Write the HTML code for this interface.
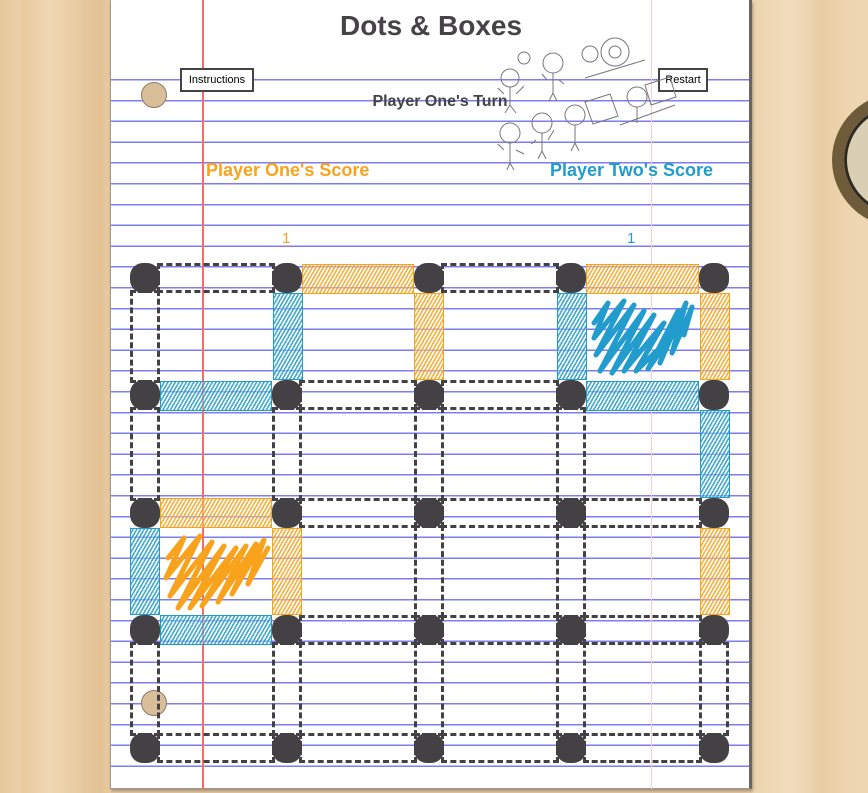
<!DOCTYPE html>
<html><head><meta charset="utf-8"><style>
*{margin:0;padding:0;box-sizing:border-box}
body{width:868px;height:793px;overflow:hidden;position:relative;font-family:"Liberation Sans",sans-serif;
background:linear-gradient(90deg,#e6c79c 0,#ecd0a8 20px,#e9c99e 22px,#f0d8b4 50px,#e8c99f 80px,#e2c193 100px,#e9cba1 110px);}
.wood2{position:absolute;left:752px;top:0;width:116px;height:793px;background:linear-gradient(90deg,#ecd4ae,#f0dcbc 40px,#e9cda4 70px,#eed6b2 100px);}
.lens{position:absolute;left:832px;top:92px;width:140px;height:136px;border-radius:50%;border:12px solid #6d5b3a;background:#d9cfb4;box-shadow:inset 0 0 0 3px #2e2a22}
.paper{position:absolute;left:110px;top:0;width:642px;height:789px;background:#fff;border-left:1px solid #999;border-right:3px solid #6a6560;border-bottom:1px solid #999;box-shadow:1px 2px 3px rgba(0,0,0,.3)}
.lines{position:absolute;left:111px;top:79px;width:638px;height:689px;background:repeating-linear-gradient(180deg,#7d7df3 0,#7d7df3 1.5px,transparent 1.5px,transparent 20.8px)}
.red{position:absolute;left:202px;top:0;width:1.5px;height:789px;background:#f56a6a}
.pink{position:absolute;left:651px;top:0;width:1px;height:789px;background:#f6d0d0}
.hole{position:absolute;width:26px;height:26px;border-radius:50%;background:#d9bf99;border:1.5px solid #8a7c6a}
.abs{position:absolute}
.title{left:110px;width:642px;top:10px;text-align:center;font-size:28px;font-weight:bold;color:#454345}
.btn{position:absolute;height:24px;border:2px solid #444;background:#fff;font-size:11px;line-height:20px;text-align:center;color:#000}
.d{position:absolute;width:30px;height:30px;border-radius:13px;background:#434143}
.s{position:absolute;border:3px dashed #434143}
.o{position:absolute;border:1px solid #f9a21c;background:repeating-linear-gradient(-60deg,rgba(249,162,28,.85) 0 1.6px,rgba(255,255,255,.4) 1.6px 3.2px)}
.b{position:absolute;border:1px solid #219ccc;background:repeating-linear-gradient(-60deg,rgba(33,156,204,.85) 0 1.6px,rgba(255,255,255,.4) 1.6px 3.2px)}
</style></head><body>
<div class="wood2"></div>
<div class="lens"></div>
<div class="paper"></div>
<div class="lines"></div>
<div class="red"></div>
<div class="pink"></div>
<div class="hole" style="left:141px;top:82px"></div>
<div class="hole" style="left:141px;top:690px"></div>
<div class="abs title">Dots &amp; Boxes</div>
<div class="btn" style="left:180px;top:68px;width:74px">Instructions</div>
<div class="btn" style="left:658px;top:68px;width:50px">Restart</div>
<div class="abs" style="left:300px;width:280px;top:93px;text-align:center;font-size:16px;font-weight:bold;color:#444">Player One's Turn</div>
<div class="abs" style="left:206px;top:160px;font-size:18px;font-weight:bold;color:#f9a21c">Player One's Score</div>
<div class="abs" style="left:550px;top:160px;font-size:18px;font-weight:bold;color:#219ccc">Player Two's Score</div>
<div class="abs" style="left:282px;top:230px;font-size:15px;color:#f9a21c">1</div>
<div class="abs" style="left:627px;top:230px;font-size:15px;color:#219ccc">1</div>
<svg class="abs" style="left:490px;top:30px" width="190" height="140" fill="none" stroke="#777" stroke-width="1">
<circle cx="20" cy="48" r="9"/><path d="M20 57v18M14 64l-6-6M26 64l8-8M20 75l-5 8M20 75l6 8"/><circle cx="34" cy="28" r="6"/>
<circle cx="63" cy="33" r="10"/><path d="M63 43v20M57 50l-5-6M69 50l5 4M63 63l-4 8M63 63l4 8"/>
<circle cx="100" cy="24" r="8"/><circle cx="125" cy="22" r="14"/><circle cx="125" cy="22" r="6"/><path d="M95 48l60-18"/>
<circle cx="20" cy="103" r="10"/><path d="M20 113v20M14 120l-6-6M26 120l8 4M20 133l-4 9M20 133l5 9"/>
<circle cx="52" cy="93" r="10"/><path d="M52 103v18M46 110l-5 4M58 110l6-10M52 121l-4 8M52 121l4 8"/>
<circle cx="85" cy="85" r="10"/><path d="M95 72l25-8 8 22-25 8zM85 95v18M85 113l-4 8M85 113l4 8"/>
<circle cx="147" cy="67" r="10"/><path d="M155 55l25-8 6 20-25 8zM147 77v16M130 95l55-20"/>
</svg>
<!-- dashed segments -->
<div class="s" style="left:157px;top:263px;width:118px;height:30px"></div>
<div class="s" style="left:441px;top:263px;width:118px;height:30px"></div>
<div class="s" style="left:299px;top:380px;width:118px;height:30px"></div>
<div class="s" style="left:441px;top:380px;width:118px;height:30px"></div>
<div class="s" style="left:299px;top:498px;width:118px;height:30px"></div>
<div class="s" style="left:441px;top:498px;width:118px;height:30px"></div>
<div class="s" style="left:583px;top:498px;width:119px;height:30px"></div>
<div class="s" style="left:299px;top:615px;width:118px;height:30px"></div>
<div class="s" style="left:441px;top:615px;width:118px;height:30px"></div>
<div class="s" style="left:583px;top:615px;width:119px;height:30px"></div>
<div class="s" style="left:157px;top:733px;width:118px;height:30px"></div>
<div class="s" style="left:299px;top:733px;width:118px;height:30px"></div>
<div class="s" style="left:441px;top:733px;width:118px;height:30px"></div>
<div class="s" style="left:583px;top:733px;width:119px;height:30px"></div>
<div class="s" style="left:130px;top:290px;width:30px;height:93px"></div>
<div class="s" style="left:130px;top:407px;width:30px;height:94px"></div>
<div class="s" style="left:272px;top:407px;width:30px;height:94px"></div>
<div class="s" style="left:414px;top:407px;width:30px;height:94px"></div>
<div class="s" style="left:556px;top:407px;width:30px;height:94px"></div>
<div class="s" style="left:414px;top:525px;width:30px;height:93px"></div>
<div class="s" style="left:556px;top:525px;width:30px;height:93px"></div>
<div class="s" style="left:130px;top:642px;width:30px;height:94px"></div>
<div class="s" style="left:272px;top:642px;width:30px;height:94px"></div>
<div class="s" style="left:414px;top:642px;width:30px;height:94px"></div>
<div class="s" style="left:556px;top:642px;width:30px;height:94px"></div>
<div class="s" style="left:699px;top:642px;width:30px;height:94px"></div>
<!-- filled -->
<div class="o" style="left:302px;top:264px;width:112px;height:30px"></div>
<div class="o" style="left:586px;top:264px;width:113px;height:30px"></div>
<div class="b" style="left:160px;top:381px;width:112px;height:30px"></div>
<div class="b" style="left:586px;top:381px;width:113px;height:30px"></div>
<div class="o" style="left:160px;top:498px;width:112px;height:30px"></div>
<div class="b" style="left:160px;top:615px;width:112px;height:30px"></div>
<div class="b" style="left:273px;top:293px;width:30px;height:87px"></div>
<div class="o" style="left:414px;top:293px;width:30px;height:87px"></div>
<div class="b" style="left:557px;top:293px;width:30px;height:87px"></div>
<div class="o" style="left:700px;top:293px;width:30px;height:87px"></div>
<div class="b" style="left:700px;top:410px;width:30px;height:88px"></div>
<div class="b" style="left:130px;top:528px;width:30px;height:87px"></div>
<div class="o" style="left:272px;top:528px;width:30px;height:87px"></div>
<div class="o" style="left:700px;top:528px;width:30px;height:87px"></div>
<svg class="abs" style="left:586px;top:293px" width="113" height="87" fill="none" stroke="#219ccc" stroke-width="5" stroke-linecap="round" stroke-linejoin="round">
<path d="M8 30L22 10 8 45 38 8 10 62 48 12 14 78 58 18 26 80 68 22 38 78 78 30 50 78 84 45 62 76 92 18 74 70 100 10 86 60 106 14 98 42"/></svg>
<svg class="abs" style="left:160px;top:528px" width="113" height="87" fill="none" stroke="#f9a21c" stroke-width="5" stroke-linecap="round" stroke-linejoin="round">
<path d="M8 30L24 10 6 50 40 8 10 68 52 14 18 80 64 18 30 80 76 20 42 78 86 18 58 74 96 16 72 66 104 12 88 56 108 20"/></svg>
<!-- dots -->
<div class="d" style="left:130px;top:263px"></div><div class="d" style="left:272px;top:263px"></div><div class="d" style="left:414px;top:263px"></div><div class="d" style="left:556px;top:263px"></div><div class="d" style="left:699px;top:263px"></div>
<div class="d" style="left:130px;top:380px"></div><div class="d" style="left:272px;top:380px"></div><div class="d" style="left:414px;top:380px"></div><div class="d" style="left:556px;top:380px"></div><div class="d" style="left:699px;top:380px"></div>
<div class="d" style="left:130px;top:498px"></div><div class="d" style="left:272px;top:498px"></div><div class="d" style="left:414px;top:498px"></div><div class="d" style="left:556px;top:498px"></div><div class="d" style="left:699px;top:498px"></div>
<div class="d" style="left:130px;top:615px"></div><div class="d" style="left:272px;top:615px"></div><div class="d" style="left:414px;top:615px"></div><div class="d" style="left:556px;top:615px"></div><div class="d" style="left:699px;top:615px"></div>
<div class="d" style="left:130px;top:733px"></div><div class="d" style="left:272px;top:733px"></div><div class="d" style="left:414px;top:733px"></div><div class="d" style="left:556px;top:733px"></div><div class="d" style="left:699px;top:733px"></div>
</body></html>
